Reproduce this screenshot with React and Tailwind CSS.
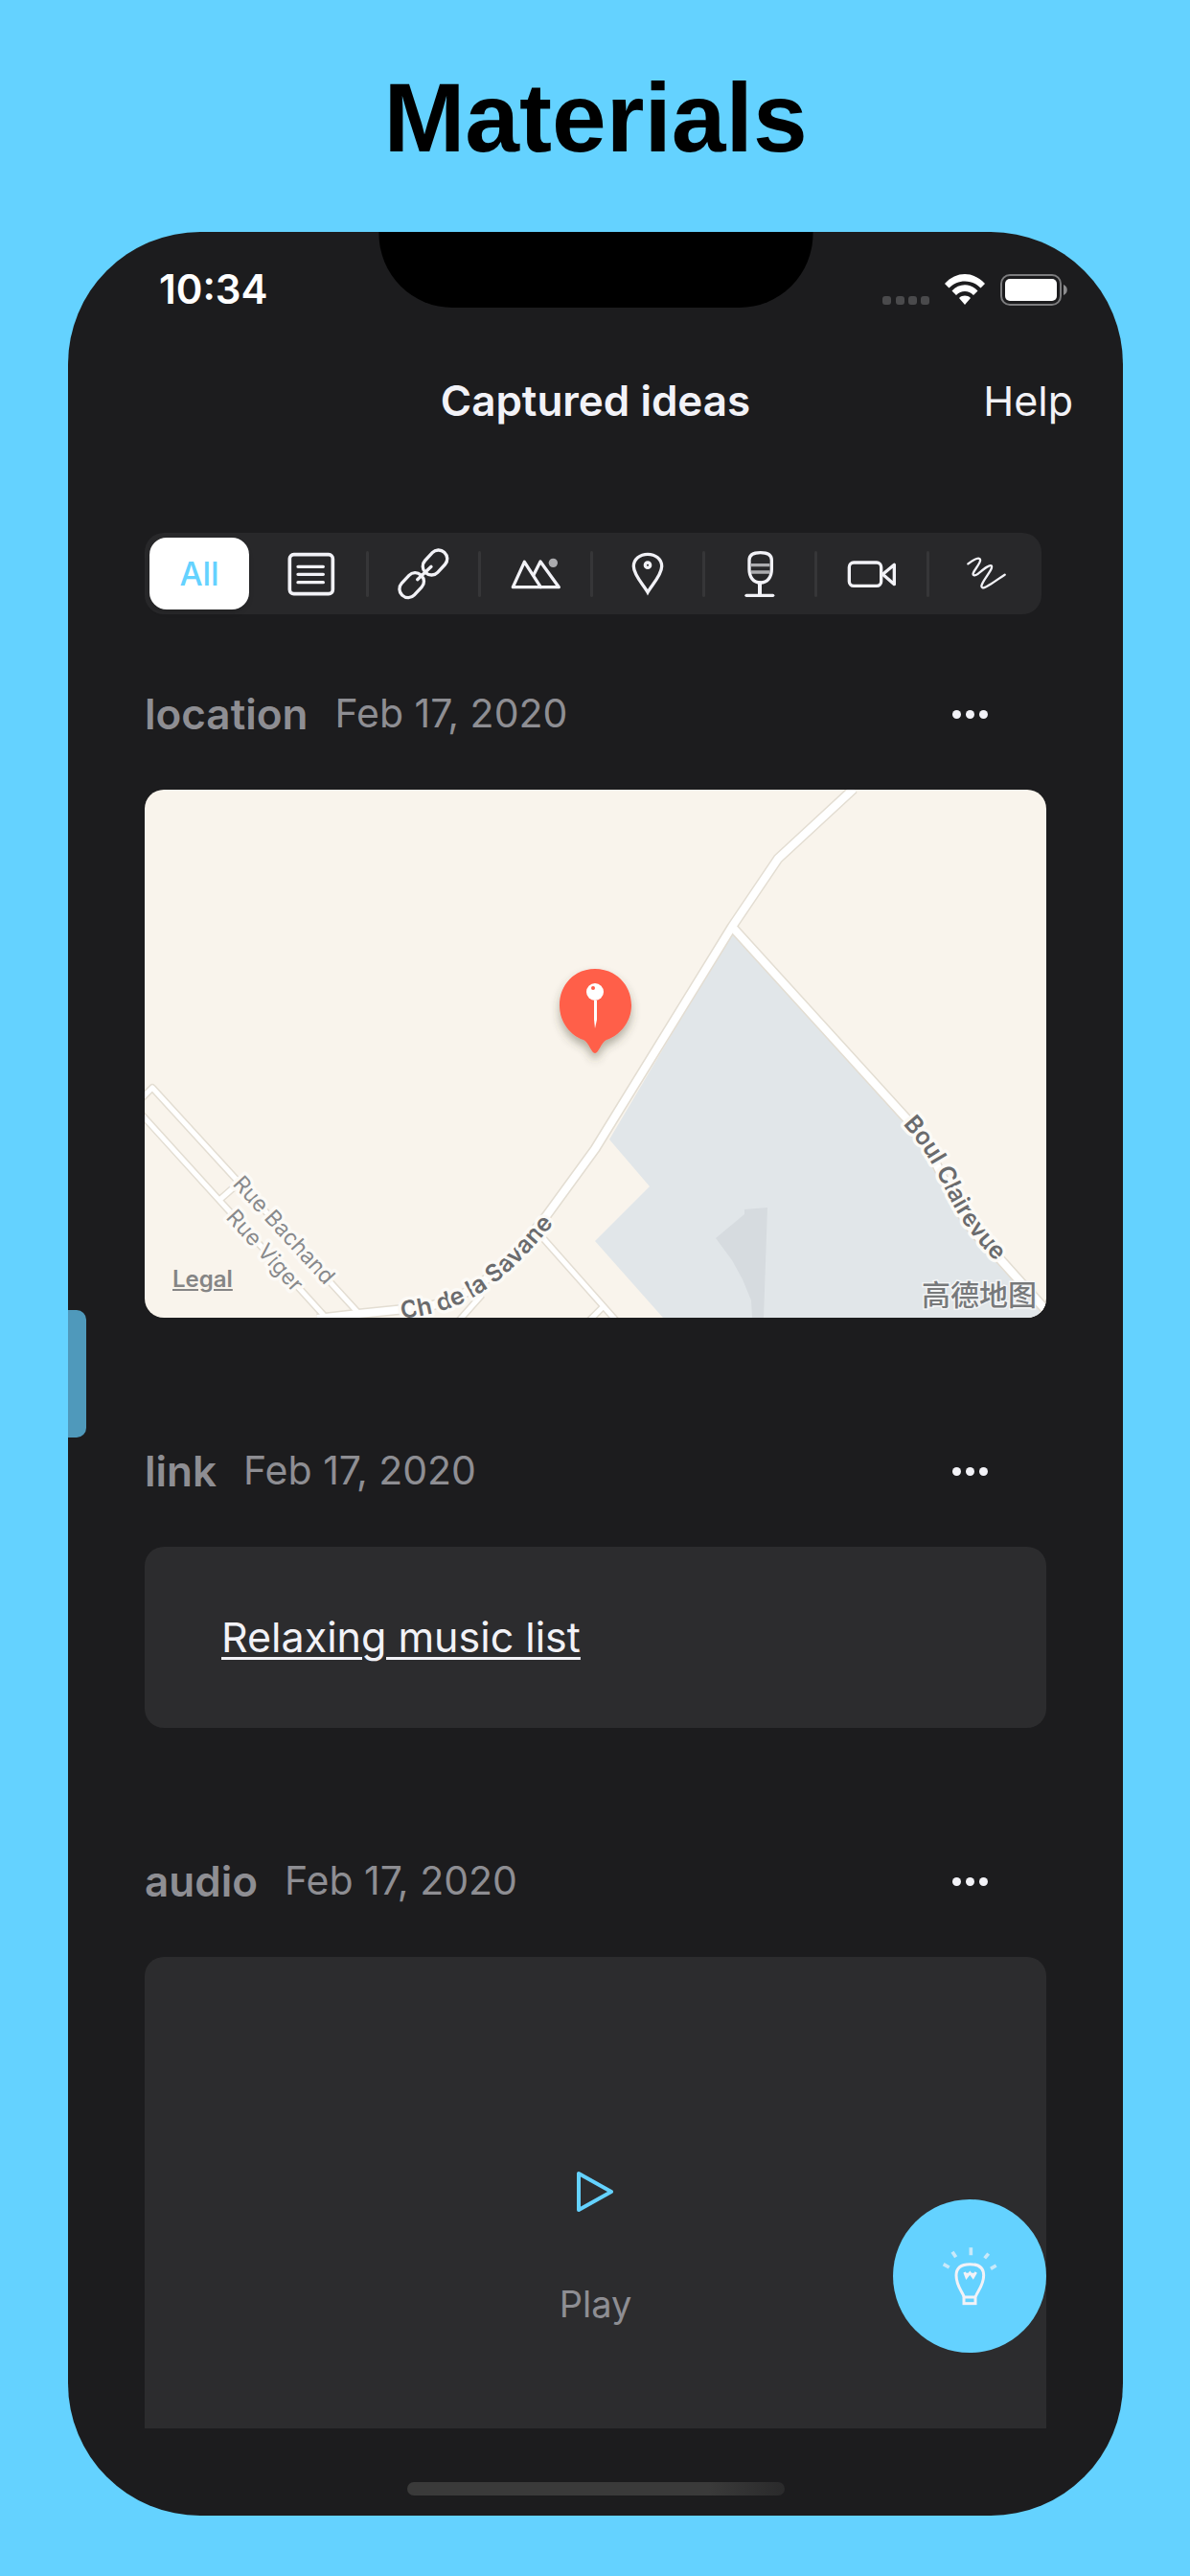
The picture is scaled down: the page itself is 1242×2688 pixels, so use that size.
const filters = [
  { id: "text", label: "Text", Icon: TextIcon },
  { id: "link", label: "Links", Icon: LinkIcon },
  { id: "image", label: "Pictures", Icon: MountainIcon },
  { id: "location", label: "Locations", Icon: PlaceIcon },
  { id: "audio", label: "Audio", Icon: MicIcon },
  { id: "video", label: "Video", Icon: VideoIcon },
  { id: "sketch", label: "Sketches", Icon: SketchIcon },
];

function Glyph({ children, width = 9 }) {
  return (
    <svg
      viewBox="-81 -81 162 162"
      className="size-[54px]"
      fill="none"
      stroke="currentColor"
      strokeWidth={width}
      strokeLinecap="round"
      strokeLinejoin="round"
      aria-hidden="true"
    >
      {children}
    </svg>
  );
}

function TextIcon() {
  return (
    <Glyph>
      <rect x="-68" y="-61" width="135" height="123" rx="13" strokeWidth="11" />
      <path d="M-42 -23H37M-42 1H37M-42 26H37" strokeWidth="10" />
    </Glyph>
  );
}

function LinkIcon() {
  return (
    <Glyph width={10}>
      <rect x="-43" y="-27" width="86" height="54" rx="26" transform="translate(36 -36) rotate(-47)" />
      <rect x="-43" y="-27" width="86" height="54" rx="26" transform="translate(-37 35) rotate(-47)" />
      <path d="M-19 17L24 -23" />
    </Glyph>
  );
}

function MountainIcon() {
  return (
    <Glyph width={10}>
      <path d="M-71 41L-35 -38L16 41Z" />
      <path d="M-6 2L15 -39L73 41H16" />
      <circle cx="55" cy="-35" r="14" fill="currentColor" stroke="none" opacity="0.65" />
    </Glyph>
  );
}

function PlaceIcon() {
  return (
    <Glyph width={10}>
      <path d="M0 57C-10 38 -44 4 -44 -24C-44 -47 -24 -62 0 -62C24 -62 44 -47 44 -24C44 4 10 38 0 57Z" strokeLinejoin="miter" />
      <circle cx="0" cy="-28" r="8" />
    </Glyph>
  );
}

function MicIcon() {
  return (
    <Glyph width={10}>
      <path d="M-33 -44C-33 -60 -22 -67 2 -67C26 -67 37 -60 37 -44V-15C37 10 24 27 2 27C-20 27 -33 10 -33 -15Z" />
      <path d="M-27 -28H31M-27 -6H31" strokeLinecap="butt" opacity="0.65" />
      <path d="M0 28V62" strokeWidth="12" />
      <path d="M-42 67H41" />
    </Glyph>
  );
}

function VideoIcon() {
  return (
    <Glyph width={10}>
      <rect x="-71" y="-36" width="100" height="73" rx="14" />
      <path d="M34 1L70 -29V32Z" />
    </Glyph>
  );
}

function SketchIcon() {
  return (
    <Glyph width={7}>
      <path d="M-56 -32C-40 -44 -26 -51 -20 -48C-10 -42 -36 -14 -40 -2C-42 8 -30 4 -24 -1C-8 -14 10 -30 17 -26C26 -18 -14 24 -14 38C-12 50 4 38 14 32C32 21 44 11 59 2" />
    </Glyph>
  );
}

function SignalDots() {
  return (
    <svg viewBox="0 0 49 32" className="h-8 w-[49px] text-[#4a4a4c]" fill="currentColor" aria-hidden="true">
      <rect x="0" y="23" width="9" height="9" rx="3" />
      <rect x="14" y="23" width="9" height="9" rx="3" />
      <rect x="27" y="23" width="9" height="9" rx="3" />
      <rect x="40" y="23" width="9" height="9" rx="3" />
    </svg>
  );
}

function WifiIcon() {
  return (
    <svg viewBox="0 0 42 32" className="h-8 w-[42px]" fill="currentColor" aria-hidden="true">
      <path d="M0 10C12 -3.300 30 -3.300 42 10L37.500 14.500C28.500 5 13.500 5 4.500 14.500Z" />
      <path d="M7.500 17.500C15 9.300 27 9.300 34.500 17.500L30 22C25 16.800 17 16.800 12 22Z" />
      <path d="M15 25C18.500 21.800 23.500 21.800 27 25L21 32Z" />
    </svg>
  );
}

function BatteryIcon() {
  return (
    <svg viewBox="0 0 71 33" className="h-[33px] w-[71px]" aria-hidden="true">
      <rect x="1" y="1" width="62" height="31" rx="9" fill="none" stroke="#7c7c7e" strokeWidth="2" />
      <rect x="5" y="5" width="54" height="23" rx="5" fill="#fff" />
      <path d="M66 11C71 13 71 20 66 22Z" fill="#8c8c8e" />
    </svg>
  );
}

function LightbulbIcon() {
  return (
    <svg viewBox="-96 -96 192 192" className="size-16" fill="none" stroke="#f2f2f7" strokeWidth="9" aria-hidden="true">
      <path d="M-18 64C-24 48 -42 30 -42 -2C-42 -26 -26 -37 1 -37C28 -37 44 -26 44 -2C44 30 24 48 19 64" />
      <rect x="-18" y="66" width="36" height="20" />
      <path d="M-16 -12L-10 4L1 -10L11 4L20 -12" strokeWidth="8" />
      <path d="M-18 -10H22L11 2L1 -5L-10 2Z" fill="#f2f2f7" stroke="none" />
      <path d="M4 -89V-65M-54 -76L-43 -59M59 -70L47 -56M-82 -37L-64 -27M83 -33L66 -23" strokeWidth="11" opacity="0.7" />
    </svg>
  );
}

function StatusBar() {
  return (
    <div className="flex h-[120px] items-center justify-between pr-[57px] pl-[95px] text-white">
      <time className="text-[42px] leading-10 font-semibold">10:34</time>
      <div className="flex items-center gap-4">
        <SignalDots />
        <WifiIcon />
        <BatteryIcon />
      </div>
    </div>
  );
}

function FilterBar() {
  return (
    <div role="group" aria-label="Filter ideas" className="mr-[5px] grid h-[85px] grid-cols-8 rounded-[20px] bg-[#28282a] text-[#f2f2f7]">
      <button type="button" aria-pressed="true" className="flex py-[5px] pr-2 pl-[5px]">
        <span className="flex h-full flex-1 items-center justify-center rounded-[18px] bg-white text-[34px] font-medium text-[#64d2ff] shadow-md">
          All
        </span>
      </button>
      {filters.map(({ id, label, Icon }) => (
        <button key={id} type="button" aria-label={label} className="group flex items-center">
          <span className="flex flex-1 justify-center">
            <Icon />
          </span>
          <span className="h-12 w-[3px] rounded-full bg-[#363638] group-last:hidden" />
        </button>
      ))}
    </div>
  );
}

function Idea({ kind, date, children }) {
  return (
    <section>
      <header className="mb-[39px] flex h-20 items-center">
        <h2 className="text-[44px] font-semibold text-[#8e8e93]">{kind}</h2>
        <time className="ml-7 text-[41px] text-[#8e8e93]">{date}</time>
        <button type="button" aria-label={`More actions for ${kind}`} className="mr-12 ml-auto flex h-16 w-16 items-center justify-center gap-[5px]">
          <span className="size-[9px] rounded-full bg-[#f2f2f7]" />
          <span className="size-[9px] rounded-full bg-[#f2f2f7]" />
          <span className="size-[9px] rounded-full bg-[#f2f2f7]" />
        </button>
      </header>
      {children}
    </section>
  );
}

const majorRoad = "M740 -1L661 72L613 143L470 375L419 445C390 480 350 535 282 541L223 547L180 552";
const boulevard = "M613 143L795 343C840 395 835 440 892 489L945 548";
const minorRoads = "M-4 323L8 311L223 546M-4 338L191 553M77 429L93 415M414 466L492 554M478 540L464 554M328 554L352 527";

function MapView() {
  return (
    <div className="relative overflow-hidden rounded-[20px]">
      <svg viewBox="0 0 941 551" className="block w-full bg-[#f9f4ec] font-['Inter',sans-serif]" role="img" aria-label="Map with a dropped pin">
        <defs>
          <path id="savane" d="M268 552C335 544 370 522 435 443" />
          <path id="clairevue" d="M791 349C845 408 826 436 905 508" />
          <path id="bachand" d="M91 412L206 537" />
          <path id="viger" d="M84 447L175 547" />
          <filter id="pinShadow" x="-50%" y="-50%" width="200%" height="200%">
            <feDropShadow dx="0" dy="6" stdDeviation="5" floodColor="#444433" floodOpacity="0.4" />
          </filter>
        </defs>
        <path d="M613 149L485 365L527 414L470 471L541 551H941V544L892 492C845 450 840 400 795 348Z" fill="#e1e6e9" />
        <path d="M626 438L650 436L646 551H634L633 533L624 511L613 491L596 468L626 443Z" fill="#d6dbdf" />
        <g fill="none" strokeLinejoin="round">
          <path d={minorRoads} stroke="#e3ddd2" strokeWidth="8" />
          <path d={majorRoad} stroke="#e3ddd2" strokeWidth="11" />
          <path d={boulevard} stroke="#e3ddd2" strokeWidth="11" />
          <path d={minorRoads} stroke="#fff" strokeWidth="5" />
          <path d={majorRoad} stroke="#fff" strokeWidth="8" />
          <path d={boulevard} stroke="#fff" strokeWidth="8" />
        </g>
        <g stroke="#fcfaf6" strokeWidth="7" strokeLinejoin="round" paintOrder="stroke">
          <g fill="#88898b" fontSize="23">
            <text><textPath href="#bachand">Rue Bachand</textPath></text>
            <text><textPath href="#viger">Rue Viger</textPath></text>
          </g>
          <g fill="#6a6b6d" fontSize="25" fontWeight="600">
            <text><textPath href="#savane">Ch de la Savane</textPath></text>
            <text><textPath href="#clairevue">Boul Clairevue</textPath></text>
          </g>
        </g>
        <g filter="url(#pinShadow)">
          <path d="M470 187C491 187 508 203 508 225C508 243 495 257 482 261C476 264 474 275 470 275C466 275 464 264 458 261C445 257 433 243 433 225C433 203 449 187 470 187Z" fill="#ff5e4a" />
        </g>
        <circle cx="470" cy="211" r="9" fill="#fff" />
        <circle cx="468" cy="207" r="2" fill="#ff5e4a" />
        <path d="M469 220H472L472 240L470 249L469 240Z" fill="#fff" />
        <text x="811" y="538" fontSize="30" fontWeight="500" fill="#77797b" stroke="#f4f5f6" strokeWidth="3" paintOrder="stroke" className="font-['Noto_Sans_CJK_SC',sans-serif]">
          高德地图
        </text>
      </svg>
      <a href="#legal" className="absolute bottom-6 left-[29px] text-[24px] leading-8 font-semibold text-[#858585] underline decoration-2 underline-offset-2">
        Legal
      </a>
    </div>
  );
}

export default function App() {
  return (
    <div className="min-h-screen bg-[#64d2ff] pr-[70px] pb-[63px] pl-[71px] font-['Inter',sans-serif]">
      <h1 className="flex h-[242px] items-center justify-center pt-1 font-['Liberation_Sans',sans-serif] text-[102px] font-bold text-black">
        Materials
      </h1>
      <main className="relative overflow-hidden rounded-[138px] bg-[#1c1c1e]">
        <div className="absolute top-0 left-1/2 h-[79px] w-[453px] -translate-x-1/2 rounded-b-[77px] bg-black" />
        <StatusBar />
        <nav className="grid h-28 grid-cols-3 items-center px-[52px] text-[#f2f2f7]">
          <h2 className="col-start-2 text-center text-[44px] font-semibold whitespace-nowrap">Captured ideas</h2>
          <a href="#help" className="justify-self-end text-[43px]">Help</a>
        </nav>
        <div className="px-20 pt-[82px]">
          <FilterBar />
          <div className="flex flex-col gap-[120px] pt-16">
            <Idea kind="location" date="Feb 17, 2020">
              <MapView />
            </Idea>
            <Idea kind="link" date="Feb 17, 2020">
              <div className="flex h-[189px] items-center rounded-[20px] bg-[#2c2c2e] px-20">
                <a href="#music" className="text-[43px] text-[#f2f2f7] underline decoration-3 underline-offset-[5px]">
                  Relaxing music list
                </a>
              </div>
            </Idea>
            <Idea kind="audio" date="Feb 17, 2020">
              <div className="flex h-[492px] justify-center rounded-t-[20px] bg-[#2c2c2e] pt-[220px]">
                <button type="button" className="flex h-[170px] flex-col items-center gap-[66px] text-[38px] leading-[52px] text-[#8e8e93]">
                  <svg viewBox="0 0 42 50" className="h-[50px] w-[42px]" fill="none" stroke="#64d2ff" strokeWidth="4" strokeLinejoin="round" aria-hidden="true">
                    <path d="M3 6V44L37 25Z" />
                  </svg>
                  Play
                </button>
              </div>
            </Idea>
          </div>
        </div>
        <div className="mx-auto mt-14 mb-[21px] h-3.5 w-[394px] rounded-full bg-linear-to-r from-[#3a3a3a] from-80% to-[#2a2a2b]" />
        <div className="absolute top-[1125px] left-0 h-[133px] w-[19px] rounded-r-[10px] bg-[#4f99bb]" />
        <button type="button" aria-label="Capture a new idea" className="absolute right-20 bottom-[170px] flex size-40 items-center justify-center rounded-full bg-[#64d2ff]">
          <LightbulbIcon />
        </button>
      </main>
    </div>
  );
}
